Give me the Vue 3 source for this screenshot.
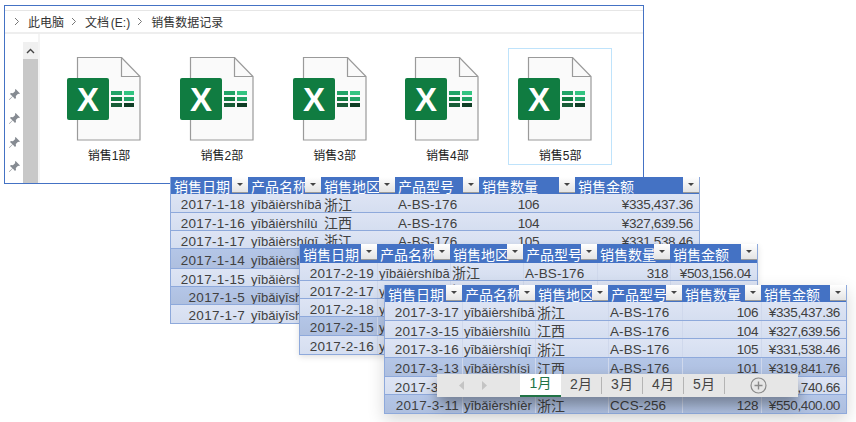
<script setup>
const crumbs = ['此电脑', '文档 (E:)', '销售数据记录']
const files = ['销售1部', '销售2部', '销售3部', '销售4部', '销售5部']
const heads = ['销售日期', '产品名称', '销售地区', '产品型号', '销售数量', '销售金额']
const row = (date, name, area, model, qty, money, dark) => ({ date, name, area, model, qty, money, dark })
const tables = [
  {
    id: 'one', cols: '77px 73px 74px 84px 96px 124px', rows: '17px 19px 18px 18px 20px 18px 18px 18px', qtyPad: '36px', faint: false,
    data: [
      row('2017-1-18', 'yībǎièrshíbā', '浙江', 'A-BS-176', '106', '¥335,437.36'),
      row('2017-1-16', 'yībǎièrshílù', '江西', 'A-BS-176', '104', '¥327,639.56'),
      row('2017-1-17', 'yībǎièrshíqī', '浙江', 'A-BS-176', '105', '¥331,538.46'),
      row('2017-1-14', 'yībǎièrshísì', '江西', 'A-BS-176', '102', '¥323,740.66', true),
      row('2017-1-15', 'yībǎièrshíwǔ', '浙江', 'A-BS-176', '103', '¥327,639.56'),
      row('2017-1-5', 'yībǎiyīshíwǔ', '江西', 'CCS-256', '110', '¥440,000.00', true),
      row('2017-1-7', 'yībǎiyīshíqī', '浙江', 'CCS-256', '112', '¥448,000.00'),
    ],
  },
  {
    id: 'two', cols: '77px 73px 73px 74px 73px 87px', rows: '19px 18px 18px 18px 19px 18px', qtyPad: '2px', faint: true,
    data: [
      row('2017-2-19', 'yībǎièrshíbā', '浙江', 'A-BS-176', '318', '¥503,156.04'),
      row('2017-2-17', 'yībǎièrshílù', '江西', 'A-BS-176', '104', '¥327,639.56'),
      row('2017-2-18', 'yībǎièrshíqī', '浙江', 'A-BS-176', '105', '¥331,538.46'),
      row('2017-2-15', 'yībǎièrshísì', '江西', 'A-BS-176', '101', '¥319,841.76', true),
      row('2017-2-16', 'yībǎièrshíwǔ', '浙江', 'A-BS-176', '102', '¥323,740.66'),
    ],
  },
  {
    id: 'three', cols: '77px 73px 73px 74px 79px 85px', rows: '17px 19px 18px 19px 19px 18px 18px', qtyPad: '3px', faint: true,
    data: [
      row('2017-3-17', 'yībǎièrshíbā', '浙江', 'A-BS-176', '106', '¥335,437.36'),
      row('2017-3-15', 'yībǎièrshílù', '江西', 'A-BS-176', '104', '¥327,639.56'),
      row('2017-3-16', 'yībǎièrshíqī', '浙江', 'A-BS-176', '105', '¥331,538.46'),
      row('2017-3-13', 'yībǎièrshísì', '江西', 'A-BS-176', '101', '¥319,841.76', true),
      row('2017-3-14', 'yībǎièrshíwǔ', '浙江', 'A-BS-176', '102', '¥323,740.66'),
      row('2017-3-11', 'yībǎièrshíèr', '浙江', 'CCS-256', '128', '¥550,400.00', true),
    ],
  },
]
const sheets = ['1月', '2月', '3月', '4月', '5月']
</script>

<template>
  <div class="canvas">
    <section class="explorer">
      <nav class="crumbs">
        <template v-for="c in crumbs" :key="c">
          <svg class="chev" width="6" height="9" viewBox="0 0 6 9"><path d="M1 1l3.5 3.5L1 8" fill="none" stroke="#777" stroke-width="1"/></svg>
          <span class="crumb">{{ c }}</span>
        </template>
      </nav>
      <div class="body">
        <div class="pins">
          <svg v-for="n in 4" :key="n" width="13" height="13" viewBox="0 0 13 13">
            <path d="M7.600 1 12 5.400l-1.100.7-.8-.4-2.300 2.400.2 2-1 .9-2.300-2.400L1.400 12l-.4-.4 3.400-3.300L2 6l.9-1 2 .2 2.400-2.300-.4-.8z" fill="#868b92"/>
          </svg>
        </div>
        <div class="scroll">
          <div class="scroll-up">
            <svg width="9" height="6" viewBox="0 0 9 6"><path d="M1 5l3.500-3.500L8 5" fill="none" stroke="#444" stroke-width="1.400"/></svg>
          </div>
          <div class="scroll-thumb"></div>
        </div>
        <div class="files">
          <figure v-for="(f, i) in files" :key="f" class="file" :class="{ selected: i === 4 }">
            <svg class="xls" width="74" height="84" viewBox="0 0 74 84">
              <path d="M10.500.5H54.500L73 19.500V83H10.500Z" fill="#fafafa" stroke="#9a9a9a" stroke-width="1.200"/>
              <path d="M54.500.5V19.500H73" fill="none" stroke="#9a9a9a" stroke-width="1.200"/>
              <rect x="0" y="21" width="42" height="42" rx="2" fill="#107c41"/>
              <text x="21" y="54" text-anchor="middle" class="xls-x">X</text>
              <rect x="44" y="34" width="11" height="4" fill="#21a366"/>
              <rect x="57" y="34" width="10" height="4" fill="#33c481"/>
              <rect x="44" y="40" width="11" height="4" fill="#107c41"/>
              <rect x="57" y="40" width="10" height="4" fill="#21a366"/>
              <rect x="44" y="46" width="11" height="4" fill="#185c37"/>
              <rect x="57" y="46" width="10" height="4" fill="#0f3d25"/>
            </svg>
            <figcaption>{{ f }}</figcaption>
          </figure>
        </div>
      </div>
    </section>

    <section
      v-for="t in tables"
      :key="t.id"
      class="sheet"
      :class="t.id"
      :style="{ gridTemplateColumns: t.cols, gridTemplateRows: t.rows }"
    >
      <div class="head">
        <div v-for="h in heads" :key="h" class="th">
          <span class="th-text">{{ h }}</span>
          <span class="filter"><i></i></span>
        </div>
      </div>
      <div v-for="r in t.data" :key="r.date" class="tr" :class="{ dark: r.dark, faint: t.faint }">
        <div class="td date">{{ r.date }}</div>
        <div class="td name">{{ r.name }}</div>
        <div class="td area">{{ r.area }}</div>
        <div class="td model">{{ r.model }}</div>
        <div class="td qty" :style="{ paddingRight: t.qtyPad }">{{ r.qty }}</div>
        <div class="td money">{{ r.money }}</div>
      </div>
    </section>

    <footer class="tabs">
      <div class="arrows">
        <svg width="6" height="9" viewBox="0 0 6 9"><path d="M5 0v9L0 4.500z" fill="#c4c4c4"/></svg>
        <svg width="6" height="9" viewBox="0 0 6 9"><path d="M1 0v9l5-4.500z" fill="#c4c4c4"/></svg>
      </div>
      <div v-for="(s, i) in sheets" :key="s" class="tab" :class="{ active: i === 0 }">{{ s }}</div>
      <svg class="plus" width="17" height="17" viewBox="0 0 17 17">
        <circle cx="8.500" cy="8.500" r="7.500" fill="none" stroke="#8a8a8a" stroke-width="1.200"/>
        <path d="M8.500 4.500v8M4.500 8.500h8" stroke="#8a8a8a" stroke-width="1.400"/>
      </svg>
    </footer>
  </div>
</template>

<style>
html, body { margin: 0; background: #fff; }
</style>

<style scoped>
.canvas {
  position: relative;
  width: 856px;
  height: 422px;
  overflow: hidden;
  background: #fff;
  font-family: "Liberation Sans", "Noto Sans CJK SC", sans-serif;
}
.explorer {
  position: absolute;
  left: 4px;
  top: 5px;
  width: 640px;
  height: 179px;
  box-sizing: border-box;
  border: 1px solid #4472c4;
  background: #fff;
  padding-top: 4px;
  display: flex;
  flex-direction: column;
}
.crumbs {
  height: 21px;
  box-sizing: content-box;
  border-top: 1px solid #e6e6e6;
  border-bottom: 2px solid #eeeeee;
  display: flex;
  align-items: center;
  padding-left: 9px;
  font-size: 12px;
  word-spacing: -1.500px;
  color: #333;
}
.chev { margin-right: 8px; }
.crumb { margin-right: 7px; }
.crumb + .chev { margin-left: 0; }
.body { flex: 1; display: flex; min-height: 0; }
.pins {
  width: 18px;
  display: flex;
  flex-direction: column;
  align-items: center;
  padding-top: 54px;
  gap: 11px;
}
.scroll { width: 15px; padding-top: 8px; display: flex; flex-direction: column; border-right: 2px solid #f4f4f4; }
.scroll-up {
  height: 17px;
  background: #f0f0f0;
  display: flex;
  align-items: center;
  justify-content: center;
}
.scroll-thumb { flex: 1; background: #c8c8c8; }
.files {
  display: flex;
  gap: 8.800px;
  padding: 14px 0 0 17px;
  align-items: flex-start;
}
.file {
  margin: 0;
  width: 104px;
  height: 117px;
  box-sizing: border-box;
  border: 1px solid transparent;
  padding: 8px 0 0 9px;
}
.file.selected { border-color: #bfe3fb; }
.xls { display: block; }
.xls-x { font: bold 33px "Liberation Sans", sans-serif; fill: #fff; }
figcaption {
  margin: 7px 0 0 -9px;
  font-size: 12px;
  line-height: 16px;
  text-align: center;
  color: #222;
}
.sheet {
  position: absolute;
  display: grid;
  box-sizing: content-box;
  border: 1px solid #8ea9db;
  border-top: none;
  background: #d9e1f2;
  font-size: 13.500px;
  color: #404040;
}
.one { left: 170px; top: 177px; }
.two { left: 299px; top: 244px; box-shadow: 0 2px 6px rgba(0, 0, 0, .12); }
.three { left: 384px; top: 285px; box-shadow: 0 6px 16px rgba(0, 0, 0, .16); }
.head, .tr { display: grid; grid-column: 1 / -1; grid-template-columns: subgrid; }
.head { background: #4472c4; color: #fff; }
.th {
  position: relative;
  display: flex;
  align-items: center;
  padding-left: 3px;
  overflow: hidden;
  font-size: 14px;
  white-space: nowrap;
}
.filter {
  position: absolute;
  right: 0;
  top: 0;
  width: 16px;
  height: 16px;
  box-sizing: border-box;
  background: linear-gradient(#ffffff, #e4e4e4);
  border-bottom: 1px solid #9a9a9a;
  display: flex;
  align-items: center;
  justify-content: center;
}
.filter i {
  width: 0;
  height: 0;
  border-left: 3px solid transparent;
  border-right: 3px solid transparent;
  border-top: 3px solid #444;
}
.tr {
  background: linear-gradient(#dde4f4, #d5def0);
  border-bottom: 1px solid #8ea9db;
  box-sizing: border-box;
}
.tr:last-child { border-bottom: none; }
.tr.dark { background: linear-gradient(#b4c6e7, #aebfdf); }
.td {
  display: flex;
  align-items: center;
  padding: 3px 3px 0;
  white-space: nowrap;
  overflow: hidden;
  min-width: 0;
  box-sizing: border-box;
}
.faint .td + .td { border-left: 1px solid #cfd8ec; padding-left: 1px; }
.date { justify-content: flex-end; letter-spacing: .3px; }
.name { font-size: 13px; }
.area { font-size: 14px; padding-top: 1px; }
.model { letter-spacing: .1px; }
.qty { justify-content: flex-end; letter-spacing: -.4px; }
.money { justify-content: flex-end; padding-right: 6px; letter-spacing: -.35px; }
.tabs {
  position: absolute;
  left: 437px;
  top: 374px;
  width: 361px;
  height: 23px;
  background: #e6e6e6;
  box-shadow: 0 8px 14px rgba(0, 0, 0, .35);
  display: flex;
  align-items: center;
  font-size: 14px;
  color: #444;
}
.arrows { width: 83px; display: flex; gap: 16px; padding-left: 22px; box-sizing: border-box; }
.tab {
  width: 41px;
  height: 17px;
  line-height: 14px;
  text-align: center;
  border-right: 1px solid #b4b4b4;
  box-sizing: border-box;
}
.tab.active {
  height: 23px;
  line-height: 18px;
  background: #fff;
  color: #217346;
  border-right: none;
  border-bottom: 2px solid #217346;
}
.plus { margin-left: 25px; }
</style>
